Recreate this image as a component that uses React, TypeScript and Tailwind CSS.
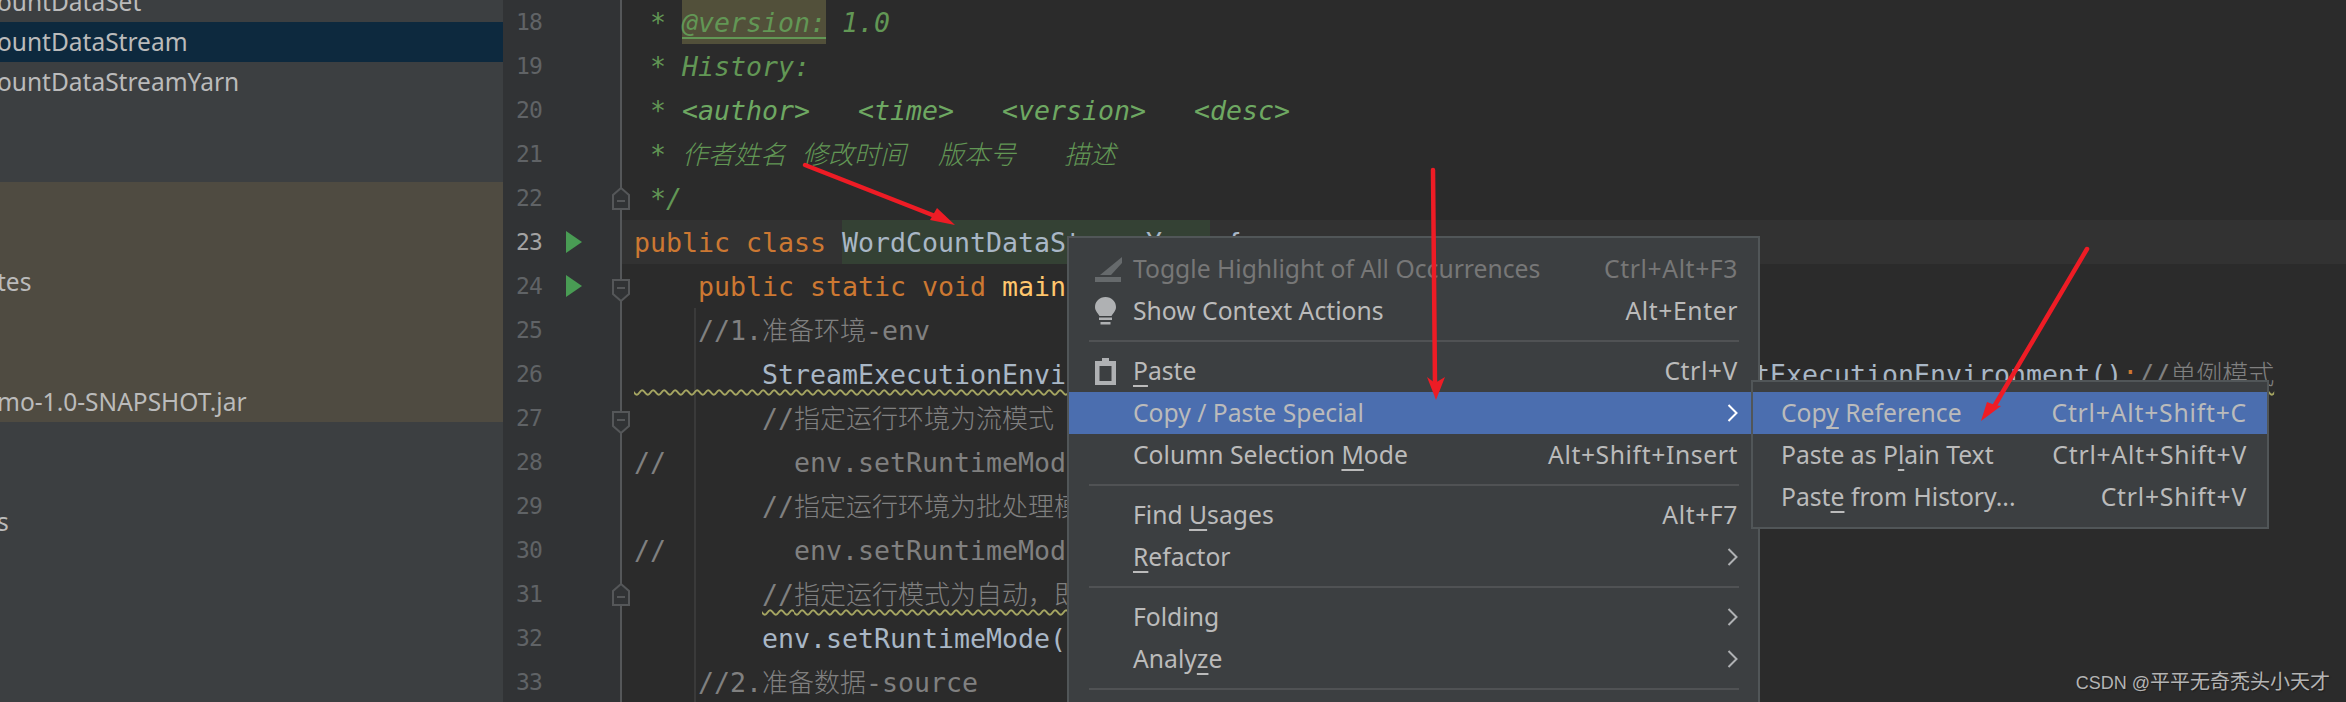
import React from "react";

type Tone = "kw" | "plain" | "fn" | "doc" | "gray" | "tag";

interface Token {
  text: string;
  tone: Tone;
  extra?: string;
}

const toneClass: Record<Tone, string> = {
  kw: "text-[#cc7832]",
  plain: "text-[#a9b7c6]",
  fn: "text-[#ffc66d]",
  doc: "text-[#629755] italic",
  tag: "text-[#6ea862] italic",
  gray: "text-[#808080]",
};

const WAVY = "underline decoration-wavy decoration-[#a5a561] decoration-[1.5px] underline-offset-[5px]";

// one entry per editor line, starting at line 18
const codeLines: { tokens: Token[]; caret?: boolean }[] = [
  {
    tokens: [
      { text: " * ", tone: "doc" },
      { text: "@version:", tone: "doc", extra: "bg-[#52503a] underline decoration-2 underline-offset-[5px] inline-block h-[44px]" },
      { text: " 1.0", tone: "doc" },
    ],
  },
  { tokens: [{ text: " * History:", tone: "doc" }] },
  {
    tokens: [
      { text: " * ", tone: "doc" },
      { text: "<author>", tone: "tag" },
      { text: "   ", tone: "doc" },
      { text: "<time>", tone: "tag" },
      { text: "   ", tone: "doc" },
      { text: "<version>", tone: "tag" },
      { text: "   ", tone: "doc" },
      { text: "<desc>", tone: "tag" },
    ],
  },
  { tokens: [{ text: " * 作者姓名 修改时间  版本号   描述", tone: "doc" }] },
  { tokens: [{ text: " */", tone: "doc" }] },
  {
    caret: true,
    tokens: [
      { text: "public class ", tone: "kw" },
      { text: "WordCountDataStreamYarn", tone: "plain", extra: "bg-[#344134] inline-block h-[44px]" },
      { text: " {", tone: "plain" },
    ],
  },
  {
    tokens: [
      { text: "    public static void ", tone: "kw" },
      { text: "main", tone: "fn" },
      { text: "(String[] args) ", tone: "plain" },
      { text: "throws", tone: "kw" },
      { text: " Exception {", tone: "plain" },
    ],
  },
  { tokens: [{ text: "    //1.准备环境-env", tone: "gray" }] },
  {
    tokens: [
      { text: "        StreamExecutionEnvironment env = StreamExecutionEnvironment.getExecutionEnvironment()", tone: "plain", extra: WAVY },
      { text: ";", tone: "kw", extra: WAVY },
      { text: "//单例模式", tone: "gray", extra: WAVY },
    ],
  },
  { tokens: [{ text: "        //指定运行环境为流模式", tone: "gray" }] },
  { tokens: [{ text: "//        env.setRuntimeMode(RuntimeExecutionMode.STREAMING);", tone: "gray" }] },
  { tokens: [{ text: "        //指定运行环境为批处理模式", tone: "gray" }] },
  { tokens: [{ text: "//        env.setRuntimeMode(RuntimeExecutionMode.BATCH);", tone: "gray" }] },
  {
    tokens: [
      { text: "        ", tone: "gray" },
      { text: "//指定运行模式为自动，即根据数据源自动选择", tone: "gray", extra: WAVY },
    ],
  },
  { tokens: [{ text: "        env.setRuntimeMode(RuntimeExecutionMode.AUTOMATIC);", tone: "plain" }] },
  { tokens: [{ text: "    //2.准备数据-source", tone: "gray" }] },
];

const treeRows: { label: string; tone: "plain" | "selected" | "sand" }[] = [
  { label: "ountDataSet", tone: "plain" },
  { label: "ountDataStream", tone: "selected" },
  { label: "ountDataStreamYarn", tone: "plain" },
  { label: "", tone: "plain" },
  { label: "", tone: "plain" },
  { label: "", tone: "sand" },
  { label: "", tone: "sand" },
  { label: "tes", tone: "sand" },
  { label: "", tone: "sand" },
  { label: "", tone: "sand" },
  { label: "mo-1.0-SNAPSHOT.jar", tone: "sand" },
  { label: "", tone: "plain" },
  { label: "", tone: "plain" },
  { label: "s", tone: "plain" },
  { label: "", tone: "plain" },
  { label: "", tone: "plain" },
  { label: "", tone: "plain" },
  { label: "", tone: "plain" },
];

const treeTone = {
  plain: "bg-[#3c3f41]",
  selected: "bg-[#0d293e]",
  sand: "bg-[#4f4b41]",
};

// CJK glyphs are a touch narrower in the original than the mono size would give
const renderCode = (text: string) =>
  text.split(/([\u4e00-\u9fff，]+)/).map((part, i) =>
    /[\u4e00-\u9fff，]/.test(part) ? (
      <span key={i} className="text-[26px] font-light">
        {part}
      </span>
    ) : (
      part
    )
  );

const Mnemonic = ({ children }: { children: React.ReactNode }) => (
  <span className="underline decoration-2 underline-offset-[5px]">{children}</span>
);

const Chevron = ({ active }: { active?: boolean }) => (
  <svg width="11" height="18" viewBox="0 0 11 18" fill="none">
    <path d="M1.5 1 L9.5 9 L1.5 17" stroke={active ? "#ffffff" : "#afb1b3"} strokeWidth="2" />
  </svg>
);

const ToggleIcon = () => (
  <svg width="27" height="25" viewBox="0 0 27 25">
    <polygon points="5,18 16,18 27,6 27,0" fill="#666a6c" />
    <rect x="0" y="20" width="26" height="5" fill="#666a6c" />
  </svg>
);

const BulbIcon = () => (
  <svg width="21" height="28" viewBox="0 0 21 28">
    <path d="M10.5 0 C4.5 0 0 4.5 0 10 C0 14 3 16 4.5 19 H16.5 C18 16 21 14 21 10 C21 4.5 16.5 0 10.5 0 Z" fill="#afb1b3" />
    <rect x="4" y="20.5" width="13" height="2.5" fill="#afb1b3" />
    <rect x="5.5" y="25" width="10" height="2.5" fill="#afb1b3" />
  </svg>
);

const ClipboardIcon = () => (
  <svg width="21" height="27" viewBox="0 0 21 27">
    <path d="M7 0 H14 V3 H21 V27 H0 V3 H7 Z" fill="#afb1b3" />
    <rect x="4.5" y="8" width="12" height="15" fill="#3c3f41" />
  </svg>
);

const Separator = () => (
  <div className="h-[18px] flex items-center pl-[20px] pr-[19px]">
    <div className="h-[2px] w-full bg-[#505254]" />
  </div>
);

interface MenuItemProps {
  label: React.ReactNode;
  shortcut?: string;
  icon?: React.ReactNode;
  submenu?: boolean;
  selected?: boolean;
  disabled?: boolean;
}

const MenuItem = ({ label, shortcut, icon, submenu, selected, disabled }: MenuItemProps) => (
  <div
    className={`h-[42px] flex items-center pl-[26px] pr-[20px] ${selected ? "bg-[#4b6eaf]" : ""} ${
      disabled ? "text-[#777777]" : "text-[#bbbbbb]"
    }`}
  >
    <div className="w-[38px] shrink-0 flex items-center">{icon}</div>
    <div className="flex-1 whitespace-nowrap">{label}</div>
    {shortcut && <div className="whitespace-nowrap tracking-[0.6px]">{shortcut}</div>}
    {submenu && <Chevron active={selected} />}
  </div>
);

const SubItem = ({ label, shortcut, selected }: { label: React.ReactNode; shortcut: string; selected?: boolean }) => (
  <div className={`h-[42px] flex items-center justify-between pl-[28px] pr-[20px] text-[#bbbbbb] ${selected ? "bg-[#4b6eaf]" : ""}`}>
    <div className="whitespace-nowrap">{label}</div>
    <div className="whitespace-nowrap tracking-[0.8px]">{shortcut}</div>
  </div>
);

const FoldMark = ({ dir }: { dir: "up" | "down" }) => (
  <svg width="18" height="23" viewBox="0 0 18 23" fill="#313335" stroke="#555759" strokeWidth="2" className={`relative z-10 shrink-0 ${dir === "down" ? "mt-[8px]" : ""}`}>
    {dir === "up" ? (
      <>
        <path d="M1 22 H17 V8 L9 1 L1 8 Z" />
        <path d="M5 14 H13" />
      </>
    ) : (
      <>
        <path d="M1 1 H17 V15 L9 22 L1 15 Z" />
        <path d="M5 9 H13" />
      </>
    )}
  </svg>
);

const foldAt: Record<number, "up" | "down"> = { 22: "up", 24: "down", 27: "down", 31: "up" };
const runAt = [23, 24];

const App = () => {
  return (
    <div className="relative w-[2346px] h-[702px] overflow-hidden flex bg-[#2b2b2b] font-['Noto_Sans',sans-serif]">
      {/* project tree */}
      <div className="w-[503px] shrink-0 bg-[#3c3f41] -mt-[18px] text-[24.5px] text-[#bbbbbb]">
        {treeRows.map((row, i) => (
          <div key={i} className={`h-[40px] leading-[40px] whitespace-nowrap overflow-hidden ${treeTone[row.tone]}`}>
            <span className="-ml-[3px] inline-block">{row.label}</span>
          </div>
        ))}
      </div>

      {/* gutter */}
      <div className="w-[119px] shrink-0 bg-[#313335] border-r-2 border-[#555759] font-['DejaVu_Sans_Mono',monospace] text-[23px] tracking-[-0.85px]">
        {codeLines.map((_, i) => {
          const n = i + 18;
          return (
            <div key={n} className="h-[44px] flex items-center pl-[13px]">
              <div className={`w-[26px] shrink-0 ${n === 23 ? "text-[#a4a3a3]" : "text-[#606366]"}`}>{n}</div>
              <div className="w-[16px] shrink-0 ml-[24px]">
                {runAt.includes(n) && (
                  <svg width="16" height="22" viewBox="0 0 16 22">
                    <polygon points="0,0 16,11 0,22" fill="#499c54" />
                  </svg>
                )}
              </div>
              <div className="ml-[30px] w-[18px] shrink-0 flex">{foldAt[n] && <FoldMark dir={foldAt[n]} />}</div>
            </div>
          );
        })}
      </div>

      {/* editor */}
      <div className="relative flex-1 font-['DejaVu_Sans_Mono','Noto_Sans_CJK_SC',monospace] text-[26.58px]">
        <div className="absolute left-[72px] top-[308px] bottom-0 w-[2px] bg-[#3a3a3a]" />
        {codeLines.map((line, i) => (
          <div key={i} className={`relative h-[44px] leading-[46px] pl-[12px] whitespace-pre ${line.caret ? "bg-[#323232]" : ""}`}>
            {line.tokens.map((token, j) => (
              <span key={j} className={`${toneClass[token.tone]} ${token.extra ?? ""}`}>
                {renderCode(token.text)}
              </span>
            ))}
          </div>
        ))}
      </div>

      {/* context menu */}
      <div className="absolute left-[1067px] top-[236px] w-[693px] h-[480px] bg-[#3c3f41] border-2 border-[#515658] pt-[10px] text-[24.7px]">
        <MenuItem disabled icon={<ToggleIcon />} label="Toggle Highlight of All Occurrences" shortcut="Ctrl+Alt+F3" />
        <MenuItem icon={<BulbIcon />} label="Show Context Actions" shortcut="Alt+Enter" />
        <Separator />
        <MenuItem icon={<ClipboardIcon />} label={<><Mnemonic>P</Mnemonic>aste</>} shortcut="Ctrl+V" />
        <MenuItem selected submenu label="Copy / Paste Special" />
        <MenuItem label={<>Column Selection <Mnemonic>M</Mnemonic>ode</>} shortcut="Alt+Shift+Insert" />
        <Separator />
        <MenuItem label={<>Find <Mnemonic>U</Mnemonic>sages</>} shortcut="Alt+F7" />
        <MenuItem submenu label={<><Mnemonic>R</Mnemonic>efactor</>} />
        <Separator />
        <MenuItem submenu label="Folding" />
        <MenuItem submenu label={<>Analy<Mnemonic>z</Mnemonic>e</>} />
        <Separator />
      </div>

      {/* submenu */}
      <div className="absolute left-[1751px] top-[380px] w-[518px] h-[149px] bg-[#3c3f41] border-2 border-[#515658] pt-[10px] text-[24.7px]">
        <SubItem selected label={<>Cop<Mnemonic>y</Mnemonic> Reference</>} shortcut="Ctrl+Alt+Shift+C" />
        <SubItem label={<>Paste as P<Mnemonic>l</Mnemonic>ain Text</>} shortcut="Ctrl+Alt+Shift+V" />
        <SubItem label={<>Past<Mnemonic>e</Mnemonic> from History...</>} shortcut="Ctrl+Shift+V" />
      </div>

      {/* annotation arrows */}
      <svg className="absolute inset-0 pointer-events-none" width="2346" height="702" viewBox="0 0 2346 702">
        <g stroke="#ee1c25" strokeWidth="4.5" strokeLinecap="round" fill="#ee1c25">
          <line x1="805" y1="165" x2="935" y2="216" />
          <line x1="1433" y1="170" x2="1435" y2="385" />
          <line x1="2087" y1="249" x2="1995" y2="405" />
        </g>
        <g fill="#ee1c25">
          <polygon points="955,225 937,208 930,220" />
          <polygon points="1436,400 1427,377 1435,383 1445,377" />
          <polygon points="1981,421 1987,402 1995,405 2001,406" />
        </g>
      </svg>

      {/* watermark */}
      <div className="absolute right-[16px] top-[668px] text-[20px] leading-[28px] text-[#b4b4b4] whitespace-nowrap font-['Liberation_Sans','Noto_Sans_CJK_SC',sans-serif] [text-shadow:1px_1px_1px_#1e1e1e]">
        <span className="text-[18px]">CSDN @</span>平平无奇秃头小天才
      </div>
    </div>
  );
};

export default App;
